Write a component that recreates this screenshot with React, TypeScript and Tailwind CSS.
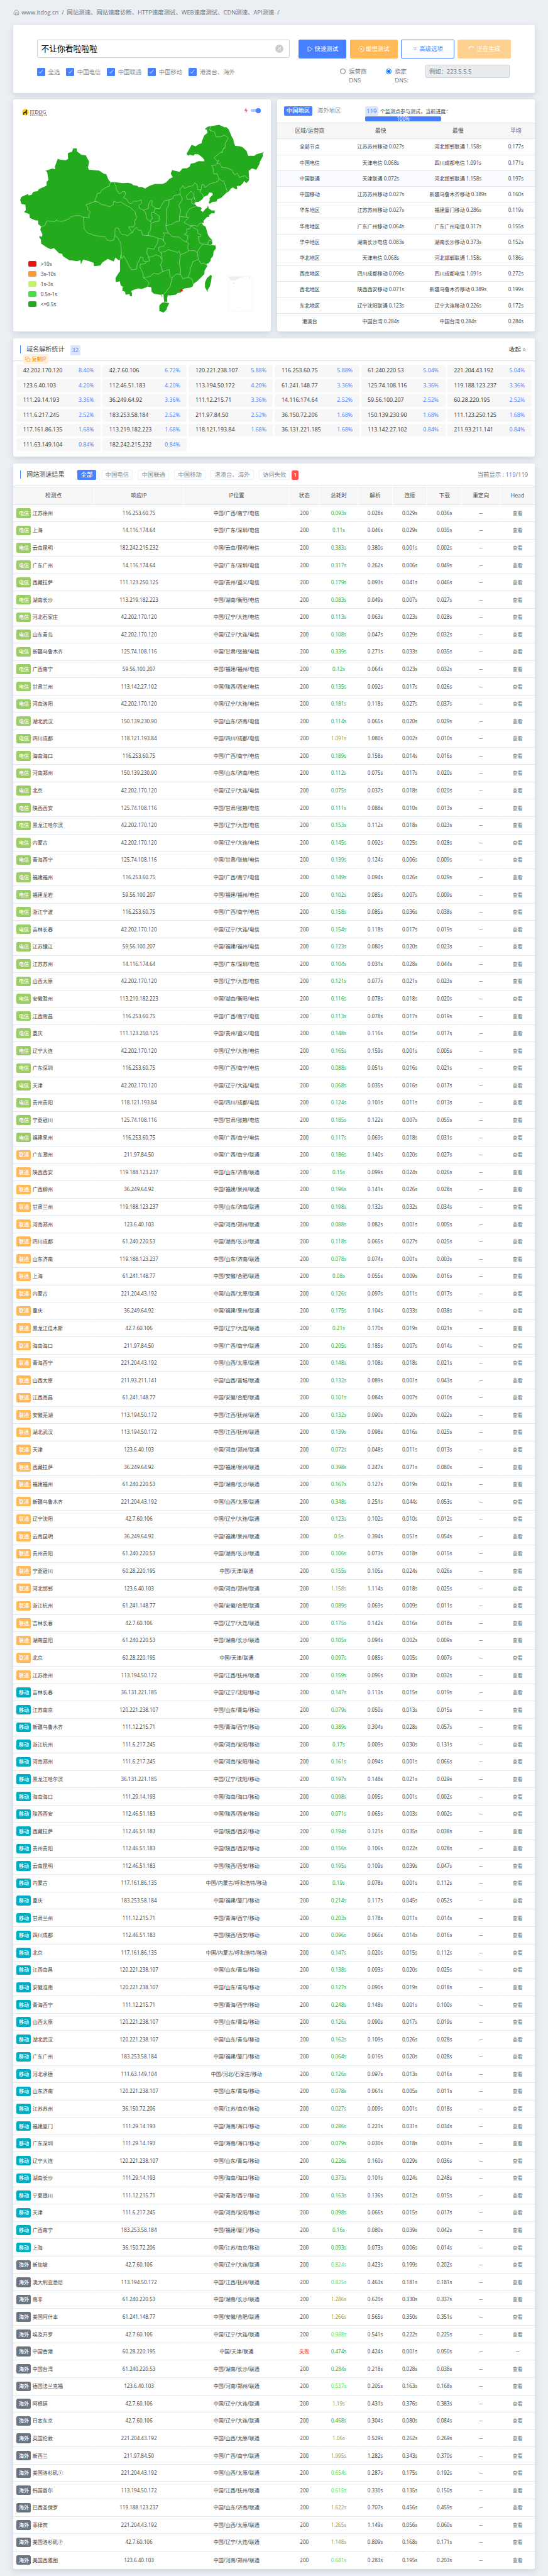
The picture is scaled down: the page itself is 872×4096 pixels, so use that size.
import React from 'react';
import { ChevronsDown, ChevronsUp, Copy, House, Play } from 'lucide-react';

type Isp = '电信' | '联通' | '移动' | '海外';
// name, ip, total, dns, connect, download
type Row = [string, string, string, string, string, string];

const ipLocations: Record<string, string> = {
    '42.202.170.120': '中国/辽宁/大连/电信',
    '116.253.60.75': '中国/广西/南宁/电信',
    '14.116.174.64': '中国/广东/深圳/电信',
    '182.242.215.232': '中国/云南/昆明/电信',
    '111.123.250.125': '中国/贵州/遵义/电信',
    '113.219.182.223': '中国/湖南/衡阳/电信',
    '125.74.108.116': '中国/甘肃/张掖/电信',
    '59.56.100.207': '中国/福建/福州/电信',
    '113.142.27.102': '中国/陕西/西安/电信',
    '150.139.230.90': '中国/山东/济南/电信',
    '118.121.193.84': '中国/四川/成都/电信',
    '211.97.84.50': '中国/广西/南宁/联通',
    '119.188.123.237': '中国/山东/济南/联通',
    '36.249.64.92': '中国/福建/泉州/联通',
    '123.6.40.103': '中国/河南/郑州/联通',
    '61.240.220.53': '中国/湖南/长沙/联通',
    '61.241.148.77': '中国/安徽/合肥/联通',
    '221.204.43.192': '中国/山西/太原/联通',
    '42.7.60.106': '中国/辽宁/大连/联通',
    '211.93.211.141': '中国/山西/晋城/联通',
    '113.194.50.172': '中国/江西/抚州/联通',
    '60.28.220.195': '中国/天津/联通',
    '36.131.221.185': '中国/辽宁/沈阳/移动',
    '120.221.238.107': '中国/山东/青岛/移动',
    '111.12.215.71': '中国/青海/西宁/移动',
    '111.6.217.245': '中国/河南/安阳/移动',
    '111.29.14.193': '中国/海南/海口/移动',
    '112.46.51.183': '中国/陕西/西安/移动',
    '117.161.86.135': '中国/内蒙古/呼和浩特/移动',
    '183.253.58.184': '中国/福建/厦门/移动',
    '111.63.149.104': '中国/河北/石家庄/移动',
    '36.150.72.206': '中国/江苏/南京/移动',
};

const results: { isp: Isp; rows: Row[] }[] = [
    {
        isp: '电信',
        rows: [
            ['江苏徐州', '116.253.60.75', '0.093', '0.028', '0.029', '0.036'],
            ['上海', '14.116.174.64', '0.11', '0.046', '0.029', '0.035'],
            ['云南昆明', '182.242.215.232', '0.383', '0.380', '0.001', '0.002'],
            ['广东广州', '14.116.174.64', '0.317', '0.262', '0.006', '0.049'],
            ['西藏拉萨', '111.123.250.125', '0.179', '0.093', '0.041', '0.046'],
            ['湖南长沙', '113.219.182.223', '0.083', '0.049', '0.007', '0.027'],
            ['河北石家庄', '42.202.170.120', '0.113', '0.063', '0.023', '0.028'],
            ['山东青岛', '42.202.170.120', '0.108', '0.047', '0.029', '0.032'],
            ['新疆乌鲁木齐', '125.74.108.116', '0.339', '0.271', '0.033', '0.035'],
            ['广西南宁', '59.56.100.207', '0.12', '0.064', '0.023', '0.032'],
            ['甘肃兰州', '113.142.27.102', '0.135', '0.092', '0.017', '0.026'],
            ['河南洛阳', '42.202.170.120', '0.181', '0.118', '0.027', '0.037'],
            ['湖北武汉', '150.139.230.90', '0.114', '0.065', '0.020', '0.029'],
            ['四川成都', '118.121.193.84', '1.091', '1.080', '0.002', '0.010'],
            ['海南海口', '116.253.60.75', '0.189', '0.158', '0.014', '0.016'],
            ['河南郑州', '150.139.230.90', '0.112', '0.075', '0.017', '0.020'],
            ['北京', '42.202.170.120', '0.075', '0.037', '0.018', '0.020'],
            ['陕西西安', '125.74.108.116', '0.111', '0.088', '0.010', '0.013'],
            ['黑龙江哈尔滨', '42.202.170.120', '0.153', '0.112', '0.018', '0.023'],
            ['内蒙古', '42.202.170.120', '0.145', '0.092', '0.025', '0.028'],
            ['青海西宁', '125.74.108.116', '0.139', '0.124', '0.006', '0.009'],
            ['福建福州', '116.253.60.75', '0.149', '0.094', '0.026', '0.029'],
            ['福建龙岩', '59.56.100.207', '0.102', '0.085', '0.007', '0.009'],
            ['浙江宁波', '116.253.60.75', '0.158', '0.085', '0.036', '0.038'],
            ['吉林长春', '42.202.170.120', '0.154', '0.118', '0.017', '0.019'],
            ['江苏镇江', '59.56.100.207', '0.123', '0.080', '0.020', '0.023'],
            ['江苏苏州', '14.116.174.64', '0.104', '0.031', '0.028', '0.044'],
            ['山西太原', '42.202.170.120', '0.121', '0.077', '0.021', '0.023'],
            ['安徽滁州', '113.219.182.223', '0.116', '0.078', '0.018', '0.020'],
            ['江西南昌', '116.253.60.75', '0.113', '0.078', '0.017', '0.019'],
            ['重庆', '111.123.250.125', '0.148', '0.116', '0.015', '0.017'],
            ['辽宁大连', '42.202.170.120', '0.165', '0.159', '0.001', '0.005'],
            ['广东深圳', '116.253.60.75', '0.088', '0.051', '0.016', '0.021'],
            ['天津', '42.202.170.120', '0.068', '0.035', '0.016', '0.017'],
            ['贵州贵阳', '118.121.193.84', '0.124', '0.101', '0.011', '0.013'],
            ['宁夏银川', '125.74.108.116', '0.185', '0.122', '0.007', '0.055'],
            ['福建泉州', '116.253.60.75', '0.117', '0.069', '0.018', '0.031'],
        ],
    },
    {
        isp: '联通',
        rows: [
            ['广东潮州', '211.97.84.50', '0.186', '0.140', '0.020', '0.027'],
            ['陕西西安', '119.188.123.237', '0.15', '0.099', '0.024', '0.026'],
            ['广西柳州', '36.249.64.92', '0.196', '0.141', '0.026', '0.028'],
            ['甘肃兰州', '119.188.123.237', '0.198', '0.132', '0.032', '0.034'],
            ['河南郑州', '123.6.40.103', '0.088', '0.082', '0.001', '0.005'],
            ['四川成都', '61.240.220.53', '0.118', '0.065', '0.027', '0.025'],
            ['山东济南', '119.188.123.237', '0.078', '0.074', '0.001', '0.003'],
            ['上海', '61.241.148.77', '0.08', '0.055', '0.009', '0.016'],
            ['内蒙古', '221.204.43.192', '0.126', '0.097', '0.011', '0.017'],
            ['重庆', '36.249.64.92', '0.175', '0.104', '0.033', '0.038'],
            ['黑龙江佳木斯', '42.7.60.106', '0.21', '0.170', '0.019', '0.021'],
            ['海南海口', '211.97.84.50', '0.205', '0.185', '0.007', '0.014'],
            ['青海西宁', '221.204.43.192', '0.148', '0.108', '0.018', '0.021'],
            ['山西太原', '211.93.211.141', '0.132', '0.089', '0.001', '0.043'],
            ['江西南昌', '61.241.148.77', '0.101', '0.084', '0.007', '0.010'],
            ['安徽芜湖', '113.194.50.172', '0.132', '0.090', '0.020', '0.022'],
            ['湖北武汉', '113.194.50.172', '0.139', '0.098', '0.016', '0.025'],
            ['天津', '123.6.40.103', '0.072', '0.048', '0.011', '0.013'],
            ['西藏拉萨', '36.249.64.92', '0.398', '0.247', '0.071', '0.080'],
            ['福建福州', '61.240.220.53', '0.167', '0.127', '0.019', '0.021'],
            ['新疆乌鲁木齐', '221.204.43.192', '0.348', '0.251', '0.044', '0.053'],
            ['辽宁沈阳', '42.7.60.106', '0.123', '0.102', '0.010', '0.012'],
            ['云南昆明', '36.249.64.92', '0.5', '0.394', '0.051', '0.054'],
            ['贵州贵阳', '61.240.220.53', '0.106', '0.073', '0.018', '0.015'],
            ['宁夏银川', '60.28.220.195', '0.155', '0.105', '0.024', '0.026'],
            ['河北邯郸', '123.6.40.103', '1.158', '1.114', '0.018', '0.025'],
            ['浙江杭州', '61.241.148.77', '0.089', '0.069', '0.009', '0.011'],
            ['吉林长春', '42.7.60.106', '0.175', '0.142', '0.016', '0.018'],
            ['湖南益阳', '61.240.220.53', '0.105', '0.094', '0.002', '0.009'],
            ['北京', '60.28.220.195', '0.097', '0.085', '0.005', '0.007'],
            ['江苏徐州', '113.194.50.172', '0.159', '0.096', '0.030', '0.032'],
        ],
    },
    {
        isp: '移动',
        rows: [
            ['吉林长春', '36.131.221.185', '0.147', '0.113', '0.015', '0.019'],
            ['江苏南京', '120.221.238.107', '0.079', '0.050', '0.013', '0.015'],
            ['新疆乌鲁木齐', '111.12.215.71', '0.389', '0.304', '0.028', '0.057'],
            ['浙江杭州', '111.6.217.245', '0.17', '0.009', '0.030', '0.131'],
            ['河南郑州', '111.6.217.245', '0.161', '0.094', '0.001', '0.066'],
            ['黑龙江哈尔滨', '36.131.221.185', '0.197', '0.148', '0.021', '0.029'],
            ['海南海口', '111.29.14.193', '0.098', '0.095', '0.001', '0.002'],
            ['陕西西安', '112.46.51.183', '0.071', '0.065', '0.003', '0.002'],
            ['西藏拉萨', '112.46.51.183', '0.194', '0.121', '0.035', '0.038'],
            ['贵州贵阳', '112.46.51.183', '0.156', '0.106', '0.022', '0.028'],
            ['云南昆明', '112.46.51.183', '0.195', '0.109', '0.039', '0.047'],
            ['内蒙古', '117.161.86.135', '0.19', '0.078', '0.001', '0.112'],
            ['重庆', '183.253.58.184', '0.214', '0.117', '0.045', '0.052'],
            ['甘肃兰州', '111.12.215.71', '0.203', '0.178', '0.011', '0.014'],
            ['四川成都', '112.46.51.183', '0.096', '0.066', '0.014', '0.016'],
            ['北京', '117.161.86.135', '0.147', '0.020', '0.015', '0.112'],
            ['江西南昌', '120.221.238.107', '0.138', '0.093', '0.020', '0.025'],
            ['安徽淮南', '120.221.238.107', '0.127', '0.090', '0.019', '0.018'],
            ['青海西宁', '111.12.215.71', '0.248', '0.148', '0.001', '0.100'],
            ['山西太原', '120.221.238.107', '0.126', '0.090', '0.017', '0.019'],
            ['湖北武汉', '120.221.238.107', '0.162', '0.109', '0.026', '0.028'],
            ['广东广州', '183.253.58.184', '0.064', '0.016', '0.020', '0.028'],
            ['河北承德', '111.63.149.104', '0.126', '0.097', '0.013', '0.016'],
            ['山东济南', '120.221.238.107', '0.078', '0.061', '0.005', '0.011'],
            ['江苏苏州', '36.150.72.206', '0.027', '0.009', '0.001', '0.018'],
            ['福建厦门', '111.29.14.193', '0.286', '0.221', '0.031', '0.034'],
            ['广东深圳', '111.29.14.193', '0.079', '0.030', '0.018', '0.031'],
            ['辽宁大连', '120.221.238.107', '0.226', '0.160', '0.029', '0.036'],
            ['湖南长沙', '111.29.14.193', '0.373', '0.101', '0.024', '0.248'],
            ['宁夏银川', '111.12.215.71', '0.163', '0.136', '0.012', '0.015'],
            ['天津', '111.6.217.245', '0.098', '0.066', '0.015', '0.017'],
            ['广西南宁', '183.253.58.184', '0.16', '0.080', '0.039', '0.042'],
            ['上海', '36.150.72.206', '0.093', '0.073', '0.006', '0.014'],
        ],
    },
    {
        isp: '海外',
        rows: [
            ['新加坡', '42.7.60.106', '0.824', '0.423', '0.199', '0.202'],
            ['澳大利亚悉尼', '113.194.50.172', '0.825', '0.463', '0.181', '0.181'],
            ['南非', '61.240.220.53', '1.286', '0.620', '0.330', '0.337'],
            ['美国阿什本', '61.241.148.77', '1.266', '0.565', '0.350', '0.351'],
            ['埃及开罗', '42.7.60.106', '0.988', '0.541', '0.222', '0.225'],
            ['中国香港', '60.28.220.195', '0.474', '0.424', '0.001', '0.050'],
            ['中国台湾', '61.240.220.53', '0.284', '0.218', '0.028', '0.038'],
            ['德国法兰克福', '123.6.40.103', '0.537', '0.205', '0.163', '0.168'],
            ['阿根廷', '42.7.60.106', '1.19', '0.431', '0.376', '0.383'],
            ['日本东京', '42.7.60.106', '0.468', '0.304', '0.080', '0.084'],
            ['英国伦敦', '221.204.43.192', '1.06', '0.529', '0.262', '0.269'],
            ['新西兰', '211.97.84.50', '1.995', '1.282', '0.343', '0.370'],
            ['美国洛杉矶①', '221.204.43.192', '0.654', '0.287', '0.175', '0.192'],
            ['韩国首尔', '113.194.50.172', '0.615', '0.330', '0.135', '0.150'],
            ['巴西圣保罗', '119.188.123.237', '1.622', '0.707', '0.456', '0.459'],
            ['菲律宾', '221.204.43.192', '1.265', '1.149', '0.056', '0.060'],
            ['美国洛杉矶②', '42.7.60.106', '1.148', '0.809', '0.168', '0.171'],
            ['美国西雅图', '123.6.40.103', '0.681', '0.283', '0.195', '0.203'],
        ],
    },
];

const ipStats = [
    ['42.202.170.120', '8.40%'], ['42.7.60.106', '6.72%'], ['120.221.238.107', '5.88%'],
    ['116.253.60.75', '5.88%'], ['61.240.220.53', '5.04%'], ['221.204.43.192', '5.04%'],
    ['123.6.40.103', '4.20%'], ['112.46.51.183', '4.20%'], ['113.194.50.172', '4.20%'],
    ['61.241.148.77', '3.36%'], ['125.74.108.116', '3.36%'], ['119.188.123.237', '3.36%'],
    ['111.29.14.193', '3.36%'], ['36.249.64.92', '3.36%'], ['111.12.215.71', '3.36%'],
    ['14.116.174.64', '2.52%'], ['59.56.100.207', '2.52%'], ['60.28.220.195', '2.52%'],
    ['111.6.217.245', '2.52%'], ['183.253.58.184', '2.52%'], ['211.97.84.50', '2.52%'],
    ['36.150.72.206', '1.68%'], ['150.139.230.90', '1.68%'], ['111.123.250.125', '1.68%'],
    ['117.161.86.135', '1.68%'], ['113.219.182.223', '1.68%'], ['118.121.193.84', '1.68%'],
    ['36.131.221.185', '1.68%'], ['113.142.27.102', '0.84%'], ['211.93.211.141', '0.84%'],
    ['111.63.149.104', '0.84%'], ['182.242.215.232', '0.84%'],
];

const regionStats = [
    ['全部节点', '江苏苏州移动 0.027s', '河北邯郸联通 1.158s', '0.177s'],
    ['中国电信', '天津电信 0.068s', '四川成都电信 1.091s', '0.171s'],
    ['中国联通', '天津联通 0.072s', '河北邯郸联通 1.158s', '0.197s'],
    ['中国移动', '江苏苏州移动 0.027s', '新疆乌鲁木齐移动 0.389s', '0.160s'],
    ['华东地区', '江苏苏州移动 0.027s', '福建厦门移动 0.286s', '0.119s'],
    ['华南地区', '广东广州移动 0.064s', '广东广州电信 0.317s', '0.155s'],
    ['华中地区', '湖南长沙电信 0.083s', '湖南长沙移动 0.373s', '0.152s'],
    ['华北地区', '天津电信 0.068s', '河北邯郸联通 1.158s', '0.186s'],
    ['西南地区', '四川成都移动 0.096s', '四川成都电信 1.091s', '0.272s'],
    ['西北地区', '陕西西安移动 0.071s', '新疆乌鲁木齐移动 0.389s', '0.199s'],
    ['东北地区', '辽宁沈阳联通 0.123s', '辽宁大连移动 0.226s', '0.172s'],
    ['港澳台', '中国台湾 0.284s', '中国台湾 0.284s', '0.284s'],
];

const ispColors: Record<Isp, string> = {
    电信: 'bg-[#9ccc65]',
    联通: 'bg-[#ffb957]',
    移动: 'bg-[#00acc1]',
    海外: 'bg-[#6c757d]',
};

const legend = [
    ['>10s', 'bg-[#e8150f]'],
    ['3s-10s', 'bg-[#f99a34]'],
    ['1s-3s', 'bg-[#bef663]'],
    ['0.5s-1s', 'bg-[#44df40]'],
    ['<=0.5s', 'bg-[#24aa1d]'],
];

function totalColor(total: string) {
    const t = parseFloat(total);
    if (t <= 0.5) return 'text-[#24aa1d]';
    if (t <= 1) return 'text-[#44df40]';
    return 'text-[#9b8f3c]';
}

const CARD = 'rounded-[3px] bg-white shadow-[0_3px_8px_rgba(120,140,170,0.28)]';

const mainland =
    'M632,546 652,545 703,552 733,550 754,556 760,564 785,569 793,577 812,576 829,586 855,569 885,557 930,557 950,547 968,525 988,514 976,490 984,468 1027,479 1044,457 1069,456 1084,446 1091,427 1113,422 1135,411 1167,412 1168,403 1158,388 1135,368 1115,366 1106,376 1086,370 1075,376 1067,364 1076,345 1096,306 1119,316 1135,303 1153,296 1155,281 1168,247 1187,229 1183,209 1171,206 1187,190 1207,186 1253,178 1285,194 1295,193 1308,207 1318,235 1326,256 1334,270 1338,293 1345,313 1370,315 1387,321 1410,345 1419,377 1455,377 1465,368 1510,352 1502,362 1503,380 1485,418 1484,428 1466,466 1442,457 1422,472 1425,524 1422,538 1408,552 1397,538 1388,554 1374,569 1354,570 1357,587 1350,591 1331,579 1319,588 1307,606 1298,610 1265,646 1242,656 1239,670 1216,672 1200,684 1193,678 1200,658 1198,648 1217,626 1214,614 1197,611 1188,628 1166,640 1155,658 1135,672 1118,673 1114,685 1127,702 1145,704 1154,714 1147,725 1160,737 1175,716 1185,711 1189,694 1194,714 1210,726 1229,727 1227,745 1210,745 1195,756 1197,767 1184,768 1163,795 1167,807 1155,806 1160,820 1176,831 1190,885 1203,905 1212,914 1214,940 1205,950 1232,951 1235,970 1221,990 1219,1016 1205,1037 1205,1047 1194,1064 1180,1070 1185,1084 1170,1112 1168,1135 1130,1177 1108,1196 1101,1215 1086,1222 1057,1226 1043,1235 1035,1252 1015,1256 1006,1266 975,1271 959,1270 956,1289 957,1312 939,1312 936,1285 935,1265 924,1264 922,1285 920,1268 900,1264 880,1260 867,1247 865,1219 843,1215 830,1222 810,1230 790,1226 763,1236 750,1243 755,1260 754,1277 743,1275 740,1262 718,1267 715,1247 699,1242 702,1215 690,1208 685,1180 662,1186 660,1160 675,1133 686,1115 686,1045 675,1043 660,1028 650,1054 616,1037 585,1060 573,1080 537,1084 535,1063 510,1052 475,1041 462,1072 460,1045 440,1052 415,1047 395,1045 375,1030 358,1018 356,1005 337,1000 308,968 290,975 270,965 235,940 233,912 225,900 225,890 240,895 242,880 230,850 235,830 219,815 218,792 200,790 170,775 168,750 137,737 147,725 145,690 122,685 115,660 122,640 160,621 163,630 180,626 190,607 215,603 222,590 266,568 266,545 277,530 269,480 260,472 300,458 317,463 313,447 330,396 345,402 375,405 389,397 387,360 412,350 417,330 438,328 439,347 465,370 492,375 497,390 509,411 503,453 508,465 567,471 595,492 607,493 620,530Z';

const provinceBorders = [
    'M632,546 624,562 626,570 604,580 580,598 575,614 557,617 541,670 491,690 503,712 499,720 517,737 506,757 510,773 478,770',
    'M478,770 455,760 430,760 405,768 395,780 358,797 328,794 322,785 315,798 268,794 255,825 235,830',
    'M478,770 475,790 480,800 481,845 500,870 540,887 575,893 600,895 612,915 630,922 650,915 657,888',
    'M541,670 560,672 578,687 600,693 628,703 647,690 650,667 668,676 690,672 720,693 747,709 772,735 775,755 782,770 770,795 772,815 763,832 735,833 745,850 757,870',
    'M657,888 657,850 664,838 677,840 685,865 700,884 710,880 730,890 745,872 757,870 765,850 780,835 790,852 808,855 815,885 840,887',
    'M652,545 664,580 663,590 682,620 700,607 714,605 718,625 705,645 725,655 738,680 750,683 765,667 785,668 808,660 808,680 793,695 797,712 820,725',
    'M820,725 848,714 850,685 862,662 871,665 867,695 888,712',
    'M820,725 832,740 838,780 862,800 M888,712 880,738 865,740 864,750 872,780 862,785 862,800 M880,740 911,762 909,795 885,800 862,810 862,850 848,870 850,883 840,887',
    'M888,712 912,716 925,690 940,665 968,658 962,700 952,715 953,780 948,824',
    'M968,658 988,650 994,632 1030,622 1030,590 1047,567 1055,586 1080,572 1100,570 1115,550 1126,560 1131,594 1150,594 1155,560 1165,562 1172,580 1200,556 1245,542 1252,522',
    'M1030,622 1043,655 1022,695 1034,725 1026,765 1026,795 1000,802 985,815 948,824',
    'M1026,765 1065,770 1065,750 1085,715 1118,702',
    'M1065,770 1079,772 1052,805 1090,825 1105,822 1130,828 1140,812 1155,806',
    'M1068,630 1080,617 1092,604 1108,620 1110,640 1096,655 1070,655 1066,640Z M1110,640 1116,665 1112,688 1096,680 1096,655',
    'M1150,594 1143,608 1160,625 1164,642',
    'M1207,186 1197,212 1226,222 1237,255 1260,256 1285,243 1305,262 1288,300 1286,328 1278,328 1270,358 1267,350 1224,388 1243,412 1250,405 1240,428',
    'M1240,428 1232,438 1210,437 1218,450 1222,493 1240,490 1252,522',
    'M1240,428 1258,428 1268,450 1298,455 1328,468 1335,490 1345,497 1358,488 1370,516 1385,508 1405,505 1410,518 1423,522',
    'M1252,522 1270,540 1280,537 1291,575 1300,606',
    'M948,824 952,850 965,872 985,895 1025,898 1045,918 1065,928 1077,935 1073,965 1080,985',
    'M965,872 932,870 943,885 932,895 935,920 M840,887 875,893 905,905 930,912 946,940 935,957 908,962 908,985 925,1006',
    'M905,905 900,935 880,975 845,968 838,995 850,1025 875,1022 890,1010 915,1020 922,1038',
    'M925,1006 925,992 945,990 960,977 1000,990 1015,996 1025,988 1032,1010 1060,998 1080,985 1110,984 1128,995',
    'M1090,825 1085,845 1068,845 1068,870 1053,880 1075,888 1072,912 1065,928',
    'M1090,825 1110,840 1130,850 1132,875 1150,882 1148,893 1132,895 1142,935 1160,942 1187,945 1205,950 M1187,945 1196,915 1212,922',
    'M1160,942 1140,970 1128,995 1135,1040 1150,1068 1165,1065 1185,1077',
    'M1135,1040 1103,1055 1090,1095 1085,1130 1075,1155 M1032,1010 1025,1065 1033,1105 1031,1137',
    'M1031,1137 1010,1133 985,1155 972,1150 M1031,1137 1040,1150 1045,1165 1075,1155 1098,1165 1106,1205',
    'M925,1006 927,1050 918,1075 930,1118 968,1105 972,1150',
    'M930,1118 905,1135 880,1130 855,1150 820,1158 818,1130 800,1090 802,1072 830,1068 835,1055 855,1050 850,1025',
    'M985,1155 972,1215 938,1262 M820,1158 835,1170 853,1190 843,1215',
    'M657,888 672,900 690,935 696,1035 708,1018 720,1040 735,1075 752,1108 782,1102 785,1065 795,1050 803,1025 815,1028 820,1050 835,1055 M690,1010 686,1045',
    'M939,1312 957,1312',
];

function ChinaMap() {
    return (
        <svg className="absolute inset-0 h-full w-full" viewBox="75 15 1474 1488" preserveAspectRatio="none">
            <g fill="#24aa1d" stroke="none">
                <path d={mainland} />
                <path d="M911,1336 925,1318 940,1314 968,1320 955,1350 953,1362 935,1381 911,1371Z" />
                <path d="M1205,1139 1211,1145 1208,1175 1200,1213 1188,1235 1187,1250 1172,1218 1172,1190 1183,1160Z" />
            </g>
            <g fill="none" stroke="#d3eed1" strokeWidth="2" strokeLinejoin="round">
                {provinceBorders.map((d) => <path key={d} d={d} />)}
            </g>
            <path d="M1030,1243 1032,1236 1038,1232 1045,1240 1045,1244Z" fill="#e8150f" stroke="#e8150f" strokeWidth="2" />
            <rect x="1306" y="1150" width="137" height="224" fill="none" stroke="#f4f4f4" strokeWidth="2" />
            <g fill="#ededed">
                <path d="M1306,1150 1395,1150 1340,1175 1320,1174Z M1422,1150 1431,1150 1428,1163Z M1334,1188 1343,1187 1337,1202 1331,1200Z" />
            </g>
            <g stroke="#ededed" strokeWidth="2">
                <path d="M1418,1218V1230M1417,1260L1411,1272M1341,1268L1333,1276M1321,1305V1314M1394,1308L1387,1320M1363,1343L1356,1350" />
            </g>
        </svg>
    );
}

function Logo() {
    return (
        <div className="flex items-start gap-[1px]">
            <svg className="h-[11px] w-[11px]" viewBox="0 0 22 22">
                <circle cx="11" cy="10.5" r="10.5" fill="#fdd00d" />
                <path d="M13 2l1 2 3 1.5-2 1.500v4l1 8h-2l-1.500-6-4 .500-2 3 .5 3H4l1-6-3 6.500L1 21l4-10 6-2z" fill="#231815" />
            </svg>
            <div className="flex flex-col pt-[1.5px] font-['Liberation_Serif',serif] leading-none text-[#3a302d]">
                <span className="text-[8.200px] leading-[7.500px] tracking-[0.150px]">ITDOG</span>
                <span className="text-[3px] font-bold leading-[3px] tracking-[0.850px]">www.itdog.cn</span>
            </div>
        </div>
    );
}

function Checkbox({ label }: { label: string }) {
    return (
        <label className="flex items-center gap-[4.800px]">
            <span className="flex h-[12.800px] w-[12.800px] items-center justify-center rounded-[1.500px] bg-[#467fff]">
                <svg className="h-[8px] w-[8px]" viewBox="0 0 12 12" fill="none" stroke="#fff" strokeWidth="1.3">
                    <path d="M1.500 6.500L4.500 9.500L10.500 2" />
                </svg>
            </span>
            <span className="text-[9.400px] leading-[13px] text-[#868e96]">{label}</span>
        </label>
    );
}

function SearchCard() {
    return (
        <section className={`${CARD} flex h-[108.100px] flex-col pl-[38.300px] pt-[23.500px]`}>
            <div className="flex">
                <div className="flex h-[28.700px] w-[402.300px] items-center justify-between rounded-[2px] border border-[#ced4da] pl-[5.500px] pr-[9px]">
                    <span className="text-[12.750px] text-black">不让你看啦啦啦</span>
                    <svg className="h-[13px] w-[13px]" viewBox="0 0 20 20">
                        <circle cx="10" cy="10" r="10" fill="#ccc" />
                        <path d="M6 6L14 14M14 6L6 14" stroke="#fff" strokeWidth="1.500" />
                    </svg>
                </div>
                <div className="ml-[13.700px] flex gap-[5.400px] text-[9.400px] text-white">
                    <button className="flex h-[29.600px] w-[76.300px] items-center justify-center gap-[2.500px] rounded-[2px] bg-[#467fff]">
                        <Play size={10} strokeWidth={2} />快速测试
                    </button>
                    <button className="flex h-[29.600px] w-[76.400px] items-center justify-center gap-[2px] rounded-[2px] bg-[#ffb957]">
                        <svg className="h-[10px] w-[10px]" viewBox="0 0 20 20" fill="none" stroke="#fff" strokeWidth="2">
                            <path d="M10 1.500A8.500 8.500 0 0 1 10 18.500" />
                            <path d="M10 18.500A8.500 8.500 0 0 1 10 1.500" strokeDasharray="4 2.700" />
                            <path d="M8 6.500V13.500L13.500 10Z" fill="#fff" stroke="none" />
                        </svg>
                        缓慢测试
                    </button>
                    <button className="flex h-[29.600px] w-[84.500px] items-center justify-center gap-[2px] rounded-[2px] border border-[#467fff] text-[#467fff]">
                        <ChevronsDown size={9} strokeWidth={1.8} />高级选项
                    </button>
                    <button className="flex h-[29.600px] w-[84.700px] items-center justify-center gap-[3px] rounded-[2px] bg-[#ffd191]">
                        <svg className="h-[10.500px] w-[10.500px]" viewBox="0 0 20 20" fill="none" stroke="#fff" strokeWidth="2">
                            <path d="M2 10A8 8 0 0 1 17 6" />
                        </svg>
                        正在生成
                    </button>
                </div>
            </div>
            <div className="mt-[10.700px] flex">
                <div className="mt-[4.500px] flex h-[13px] w-[481.700px] gap-[9.850px]">
                    {['全选', '中国电信', '中国联通', '中国移动', '港澳台、海外'].map((label) => (
                        <Checkbox key={label} label={label} />
                    ))}
                </div>
                <div className="mt-[3.500px] flex h-[28px] text-[9.400px] leading-[14px] text-[#6c757d]">
                    <span className="mt-[2.500px] h-[9px] w-[9px] rounded-full border border-[#767676] bg-white" />
                    <span className="ml-[5.500px] w-[30px]">运营商<br />DNS</span>
                    <span className="ml-[28.500px] mt-[2.500px] flex h-[9px] w-[9px] items-center justify-center rounded-full border border-[#0075ff]">
                        <span className="h-[5px] w-[5px] rounded-full bg-[#0075ff]" />
                    </span>
                    <span className="ml-[5.500px] w-[30px]">指定<br />DNS:</span>
                </div>
                <div className="ml-[18.500px] flex h-[20.600px] w-[134px] items-center rounded-[2px] border border-[#ced4da] bg-[#e9ecef] pl-[5px] text-[9.400px] text-[#6c757d]">
                    例如：223.5.5.5
                </div>
            </div>
        </section>
    );
}

function MapCard() {
    return (
        <section className={`${CARD} relative h-[369.300px] w-[410px]`}>
            <ChinaMap />
            <div className="relative flex justify-between pl-[14.700px] pr-[15.600px] pt-[13px]">
                <div className="pt-[2.300px]"><Logo /></div>
                <div className="flex items-center gap-[5px] self-start">
                    <svg className="h-[9px] w-[5px]" viewBox="0 0 10 18">
                        <path d="M5.500 0L0 10H4L4 18L10 7.500H5.800Z" fill="#ff5252" />
                    </svg>
                    <span className="flex h-[5.600px] w-[16px] items-center justify-end rounded-full bg-[#adc8ff]">
                        <span className="h-[8.400px] w-[8.400px] shrink-0 rounded-full bg-[#467fff]" />
                    </span>
                </div>
            </div>
            <div className="relative mt-[229.300px] flex flex-col gap-[6.700px] pl-[24.100px]">
                {legend.map(([label, color]) => (
                    <div key={label} className="flex h-[9.400px] items-center gap-[6.700px]">
                        <span className={`h-[9.400px] w-[13.400px] rounded-[2px] ${color}`} />
                        <span className="text-[8.050px] leading-[9.400px] text-[#333]">{label}</span>
                    </div>
                ))}
            </div>
        </section>
    );
}

function RegionCard() {
    return (
        <section className={`${CARD} flex h-[369.300px] w-[410px] flex-col overflow-hidden`}>
            <div className="flex h-[36.600px] shrink-0 items-start pl-[10.900px] pt-[10.700px] text-[9.400px]">
                <span className="flex h-[15px] w-[44.300px] items-center justify-center rounded-[2px] bg-[#467fff] font-medium text-white">中国地区</span>
                <span className="ml-[8.300px] flex h-[15px] items-center text-[#868e96]">海外地区</span>
                <div className="ml-[38.700px]">
                    <div className="flex h-[15.600px] items-center gap-[3px]">
                        <span className="flex h-[15.600px] w-[20.800px] items-center justify-center rounded-[2.500px] bg-[#dae6ff] text-[#467fff]">119</span>
                        <span className="text-[8.050px] text-[#444]">个监测点参与测试，当前进度：</span>
                    </div>
                    <div className="mt-[0.500px] flex h-[8.400px] w-[121px] items-center justify-center rounded-[2px] bg-[#467fff] text-[8.050px] font-medium leading-[8px] text-white">100%</div>
                </div>
            </div>
            <div className="grid h-[26.600px] shrink-0 grid-cols-[103px_123px_123px_61px] items-center border-y border-[#dfe5eb] bg-[#f7f7f7] text-center text-[8.720px] text-[#495057]">
                <span>区域/运营商</span><span>最快</span><span>最慢</span><span>平均</span>
            </div>
            {regionStats.map((row, i) => (
                <div
                    key={row[0]}
                    className={`grid h-[25.230px] shrink-0 grid-cols-[103px_123px_123px_61px] items-center text-center text-[8.050px] text-[#3a3d41] ${i < 11 ? 'border-b border-[#e1e7ec]' : ''} ${i === 2 ? 'bg-[#f9fbff]' : ''}`}
                >
                    {row.map((cell, j) => <span key={j}>{cell}</span>)}
                </div>
            ))}
        </section>
    );
}

function DnsCard() {
    return (
        <section className={`${CARD} h-[187.900px]`}>
            <div className="flex h-[36.100px] items-start justify-between border-b border-[#dfe2e6] pl-[11px] pr-[13px] pt-[10.700px]">
                <div>
                    <div className="flex h-[15.600px]">
                        <span className="h-[13.400px] w-[1.700px] bg-[#467fff]" />
                        <span className="ml-[8.800px] text-[10.060px] leading-[13.400px] text-[#495057]">域名解析统计</span>
                        <span className="ml-[9.200px] flex h-[15.600px] w-[16px] items-center justify-center rounded-[2.500px] bg-[#dae6ff] text-[9.400px] text-[#467fff]">32</span>
                    </div>
                    <span className="relative -mt-[1.300px] ml-[5px] flex h-[15.400px] w-[40.600px] items-center justify-center gap-[2px] rounded-[2.500px] bg-[#fff0dd] text-[8.050px] font-medium text-[#ff9800]">
                        <Copy size={8.500} strokeWidth={2} />复制IP
                    </span>
                </div>
                <span className="flex items-center gap-[1.500px] text-[9.400px] leading-[14px] text-[#444]">
                    收起<ChevronsUp size={8} strokeWidth={2} />
                </span>
            </div>
            <div className="ml-[5.500px] mt-[5.600px] grid grid-cols-[repeat(6,134.100px)] gap-x-[3px] gap-y-[3.400px]">
                {ipStats.map(([ip, pct]) => (
                    <div key={ip} className="flex h-[20.100px] items-center justify-between rounded-[2px] bg-[#f7f7f7] px-[10.500px] text-[8.860px]">
                        <span className="text-[#333]">{ip}</span>
                        <span className="text-[#467fff]">{pct}</span>
                    </div>
                ))}
            </div>
        </section>
    );
}

const TABLE_COLS = 'mx-[0.500px] grid grid-cols-[129.300fr_143.500fr_168.500fr_47.800fr_60.900fr_54.500fr_54.800fr_54.500fr_60.900fr_55.100fr] gap-x-px';

function ResultTable() {
    return (
        <div className="mt-[1px]">
            <div className={`${TABLE_COLS} h-[28.400px] text-[8.720px] text-[#495057]`}>
                {['检测点', '响应IP', 'IP位置', '状态', '总耗时', '解析', '连接', '下载', '重定向', 'Head'].map((h) => (
                    <div key={h} className="flex items-center justify-center border-y border-[#dfe4e9] bg-[#f7f7f7]">{h}</div>
                ))}
            </div>
            {results.map(({ isp, rows }) =>
                rows.map(([name, ip, total, dns, connect, download]) => {
                    // blocked node: has timings but no usable response
                    const failed = name === '中国香港';
                    const cells = [
                        { text: ip },
                        { text: ipLocations[ip] },
                        { text: failed ? '失败' : '200', color: failed ? 'text-[#ff1a1a]' : '' },
                        { text: `${total}s`, color: totalColor(total) },
                        { text: `${dns}s` },
                        { text: `${connect}s` },
                        { text: `${download}s` },
                        { text: '--' },
                        { text: failed ? '--' : '查看', color: failed ? '' : 'text-[#6c757d]' },
                    ];
                    const last = name === '美国西雅图';
                    const border = last ? '' : 'border-b border-[#e1e7ec]';
                    return (
                        <div key={isp + name} className={`${TABLE_COLS} h-[27.590px] text-[8.050px] text-[#3a3d41]`}>
                            <div className={`flex items-center gap-[2.400px] pl-[5.300px] ${border}`}>
                                <span className={`flex h-[15.400px] w-[22.900px] items-center justify-center rounded-[2.500px] font-medium text-white ${ispColors[isp]}`}>{isp}</span>
                                <span>{name}</span>
                            </div>
                            {cells.map((c, i) => (
                                <div key={i} className={`flex items-center justify-center ${border} ${c.color ?? ''}`}>{c.text}</div>
                            ))}
                        </div>
                    );
                })
            )}
        </div>
    );
}

function ResultCard() {
    return (
        <section className={`${CARD} h-[3348.400px]`}>
            <div className="flex h-[36.300px] items-start justify-between border-b border-[#dfe2e6] pl-[11px] pr-[11.200px] pt-[10px]">
                <div className="flex text-[9.400px] text-[#868e96]">
                    <span className="mt-[0.700px] h-[13.400px] w-[1.700px] bg-[#467fff]" />
                    <span className="ml-[8.800px] mt-[0.700px] text-[10.060px] leading-[13.400px] text-[#495057]">网站测速结果</span>
                    <span className="ml-[20.200px] flex h-[16.600px] w-[30.500px] items-center justify-center rounded-[2px] bg-[#467fff] font-medium text-white">全部</span>
                    {['中国电信', '中国联通', '中国移动'].map((tab) => (
                        <span key={tab} className="ml-[8.400px] flex h-[16.600px] w-[49.500px] items-center justify-center rounded-[2px] border border-[#eceff2]">{tab}</span>
                    ))}
                    <span className="ml-[8.400px] flex h-[16.600px] w-[68.300px] items-center justify-center rounded-[2px] border border-[#eceff2]">港澳台、海外</span>
                    <span className="ml-[8.400px] flex h-[16.600px] w-[49.500px] items-center justify-center rounded-[2px] border border-[#eceff2]">访问失败</span>
                    <span className="ml-[2.900px] mt-[0.700px] flex h-[15.400px] w-[11.200px] items-center justify-center rounded-[2.500px] bg-[#ff4f4f] text-[8.050px] font-semibold text-white">1</span>
                </div>
                <span className="text-[9.400px] leading-[16.600px] text-[#6c757d]">
                    当前显示 : <span className="text-[#467fff]">119</span>/119
                </span>
            </div>
            <ResultTable />
        </section>
    );
}

export default function App() {
    return (
        <div className="h-[4096px] w-[872px] overflow-hidden bg-[#ebeef3] px-[20.700px] font-['Open_Sans','Noto_Sans_CJK_SC',sans-serif]">
            <nav className="flex h-[39.600px] items-center gap-[3px] text-[9.400px] text-[#6c757d]">
                <House size={10} strokeWidth={1.6} className="ml-[0.500px]" />
                <span className="whitespace-pre">www.itdog.cn  /  网站测速、网站速度诊断、HTTP速度测试、WEB速度测试、CDN测速、API测速  /</span>
            </nav>
            <SearchCard />
            <div className="mt-[10.500px] flex justify-between">
                <MapCard />
                <RegionCard />
            </div>
            <div className="mt-[10.800px]"><DnsCard /></div>
            <div className="mt-[10.700px]"><ResultCard /></div>
        </div>
    );
}
